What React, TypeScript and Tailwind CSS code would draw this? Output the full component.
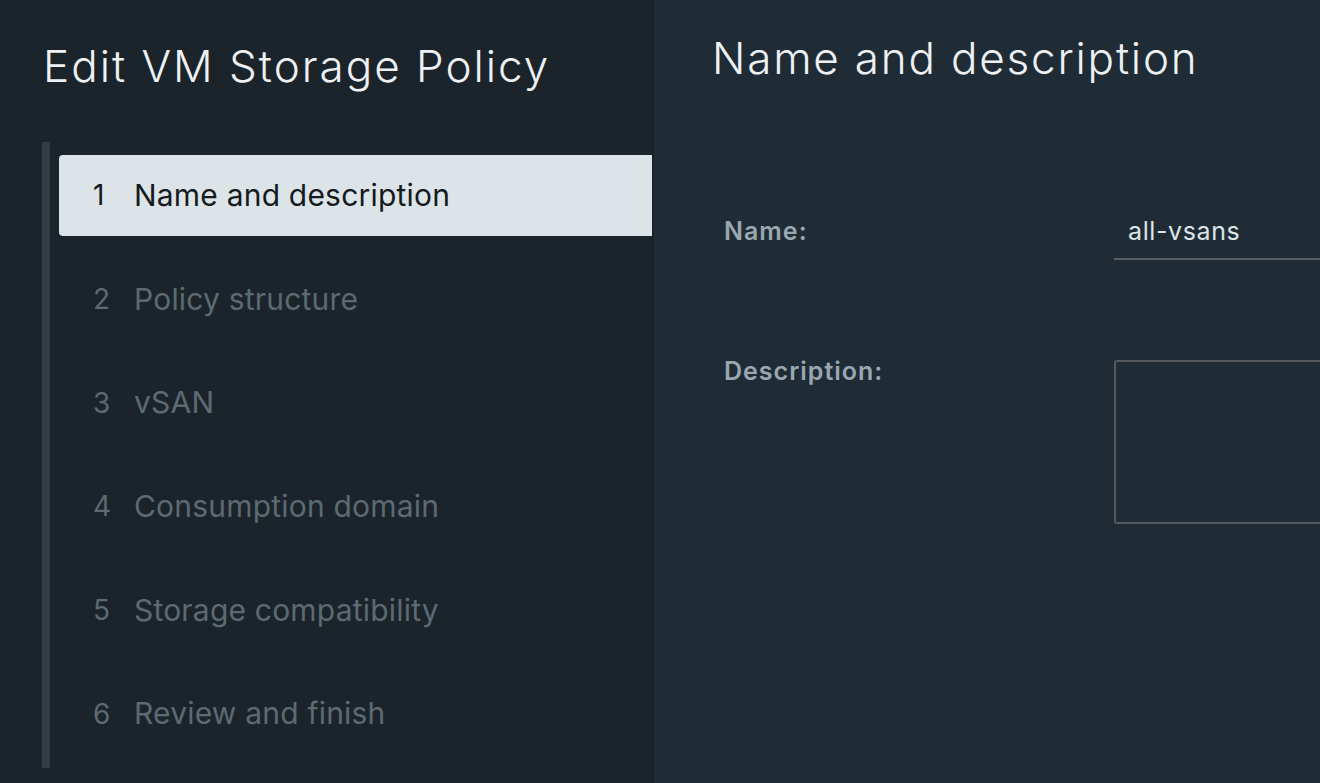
import React from "react";

const steps = [
  "Name and description",
  "Policy structure",
  "vSAN",
  "Consumption domain",
  "Storage compatibility",
  "Review and finish",
];

export default function App() {
  return (
    <div
      className="flex h-[783px] w-[1320px] overflow-hidden bg-[#1f2c35]"
      style={{ fontFamily: "Inter, 'Noto Sans', sans-serif" }}
    >
      {/* Left nav */}
      <div className="flex w-[654px] shrink-0 flex-col border-r-2 border-[#192228] bg-[#1b242b]">
        <h1 className="mt-[37px] pl-[43px] text-[44px] font-light leading-[58px] tracking-[2px] text-[#eef1f3]">
          Edit VM Storage Policy
        </h1>
        <div className="ml-[42px] mt-[47px] flex h-[626px] flex-col gap-[23px] border-l-[8px] border-[#323e45] pb-[14px] pl-[9px] pt-[13px]">
          {steps.map((s, i) => {
            const active = i === 0;
            return (
              <div
                key={s}
                className={
                  active
                    ? "flex h-[81px] items-center rounded-l-[4px] bg-[#dde4e8] pl-[34px] text-[30px] tracking-[0.2px] text-[#141a1e]"
                    : "flex h-[81px] items-center pl-[34px] text-[30px] tracking-[0.2px] text-[#5c6a72]"
                }
              >
                <span className="w-[41px] text-[28px]">{i + 1}</span>
                <span>{s}</span>
              </div>
            );
          })}
        </div>
      </div>

      {/* Right content */}
      <div className="flex flex-1 flex-col pl-[58px]">
        <h2 className="mt-[29px] text-[44px] font-light leading-[58px] tracking-[1.8px] text-[#eef1f3]">
          Name and description
        </h2>
        <div className="mt-[132px] flex items-start">
          <div className="w-[402px] pl-[12px] text-[25px] font-semibold leading-none tracking-[1px] text-[#9aa7b0]">
            Name:
          </div>
          <div className="flex-1 border-b-2 border-[#5a5e61] pb-[14px] pl-[14px] text-[25px] leading-none tracking-[0.6px] text-[#dde4e8]">
            all-vsans
          </div>
        </div>
        <div className="mt-[100px] flex items-start">
          <div className="-mt-[1px] w-[402px] pl-[12px] text-[25px] font-semibold leading-none tracking-[1px] text-[#9aa7b0]">
            Description:
          </div>
          <div className="h-[164px] flex-1 rounded-l-[3px] border-y-2 border-l-2 border-[#565a5c]" />
        </div>
      </div>
    </div>
  );
}
